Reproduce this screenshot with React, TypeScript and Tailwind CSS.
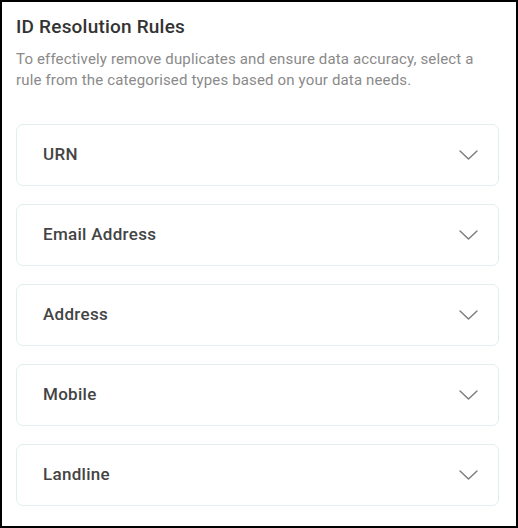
import React from "react";

const rules = ["URN", "Email Address", "Address", "Mobile", "Landline"];

const Chevron = () => (
  <svg width="19" height="10" viewBox="0 0 19 10" fill="none">
    <path d="M1 1l8.5 8L18 1" stroke="#7a7a7a" strokeWidth="1.4" strokeLinecap="round" strokeLinejoin="round" />
  </svg>
);

const App = () => {
  return (
    <div
      className="w-[518px] h-[528px] border-2 border-black bg-white pl-[14px] pr-[17px] pt-[13px]"
      style={{ fontFamily: "Roboto, 'Noto Sans', sans-serif" }}
    >
      <h1 className="text-[19px] leading-6 font-medium tracking-[0.2px] text-[#333]">ID Resolution Rules</h1>
      <p className="mt-[10px] text-[15px] leading-[21px] tracking-[0.15px] text-[#8a8a8a]">
        To effectively remove duplicates and ensure data accuracy, select a rule from the categorised types based on your data needs.
      </p>
      <div className="mt-[33px] flex flex-col gap-[18px]">
        {rules.map((r) => (
          <div
            key={r}
            className="h-[62px] flex items-center justify-between rounded-[7px] border border-[#e2eff0] pl-[26px] pr-[20px]"
          >
            <span className="text-[17px] font-medium tracking-[0.3px] text-[#444]">{r}</span>
            <Chevron />
          </div>
        ))}
      </div>
    </div>
  );
};

export default App;
